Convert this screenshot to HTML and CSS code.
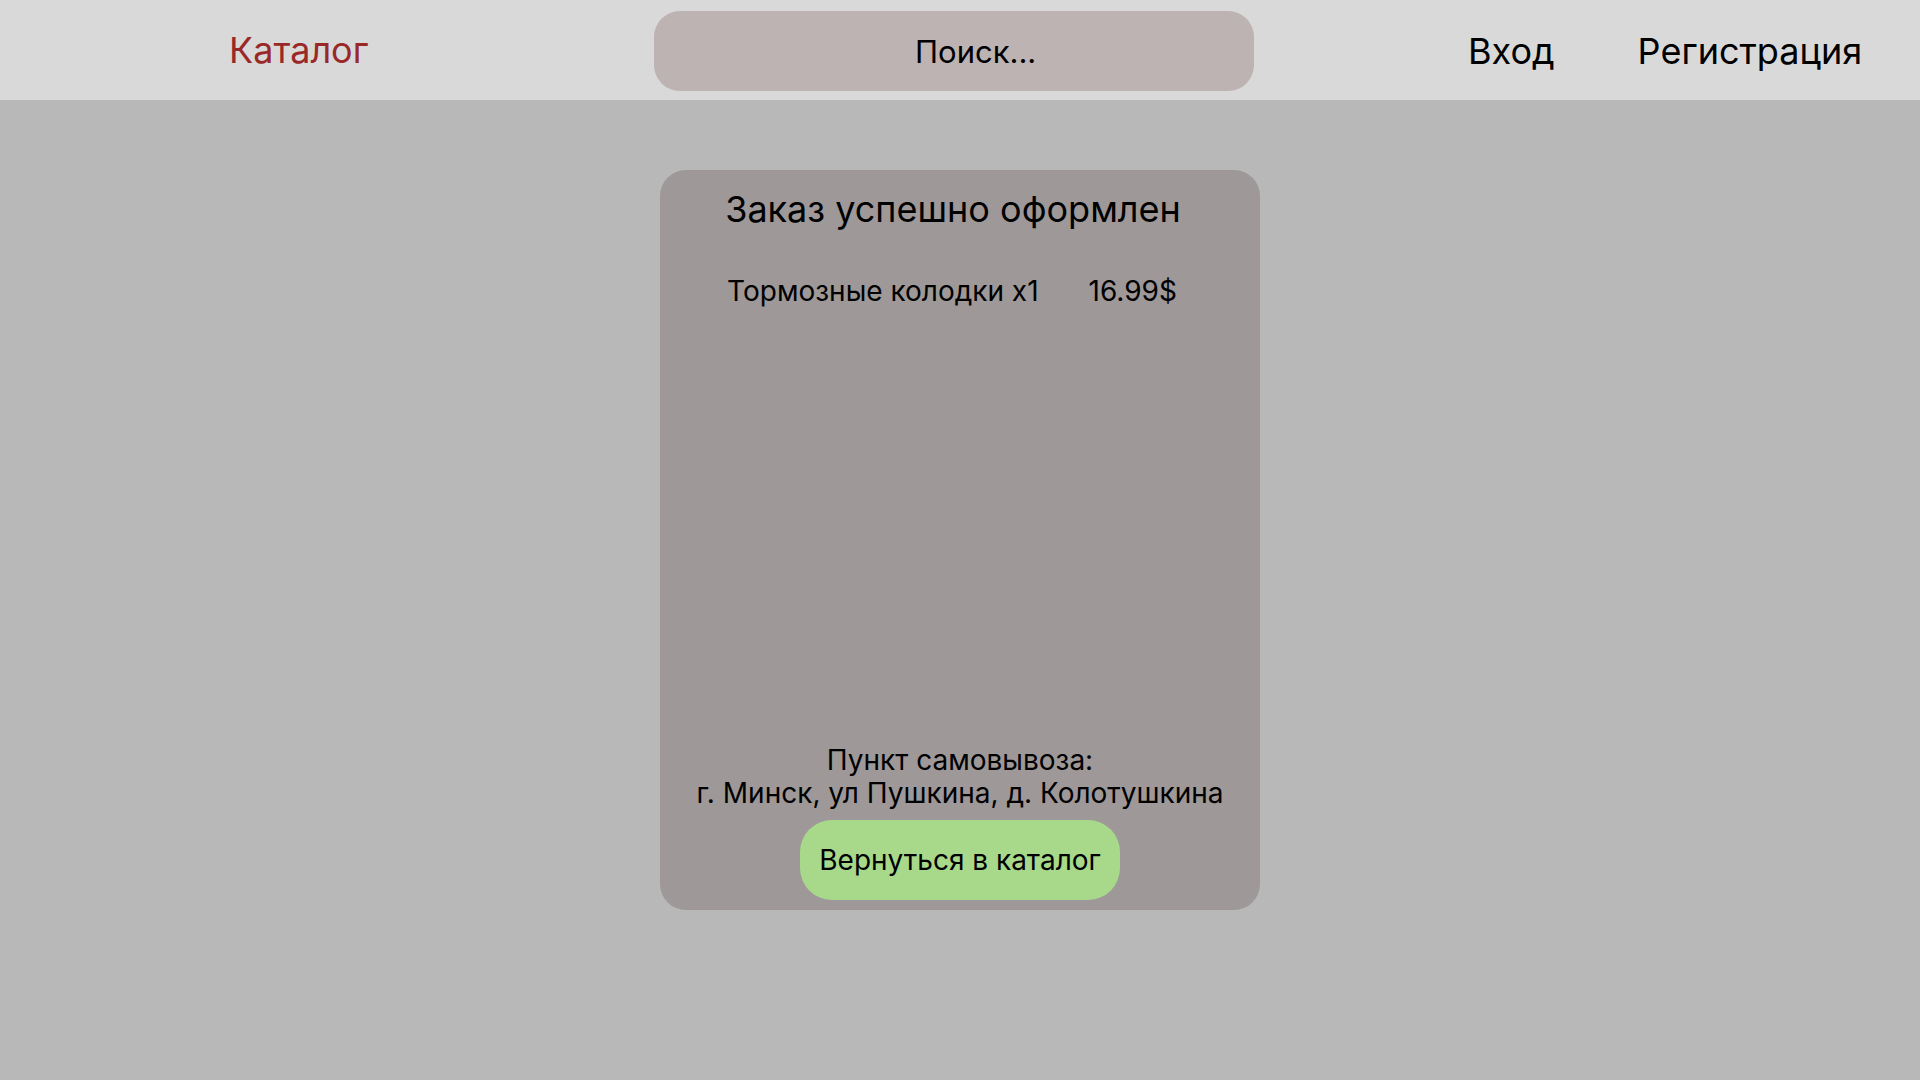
FILE: index.html
```html
<!DOCTYPE html>
<html lang="ru">
<head>
<meta charset="utf-8">
<title>Заказ оформлен</title>
<link rel="stylesheet" href="styles.css">
</head>
<body>
<header class="topbar">
  <a class="catalog-link" href="#">Каталог</a>
  <div class="search"><span class="search-text">Поиск...</span></div>
  <nav class="auth">
    <a class="auth-link login" href="#">Вход</a>
    <a class="auth-link" href="#">Регистрация</a>
  </nav>
</header>
<main class="content">
  <section class="card">
    <h1 class="card-title">Заказ успешно оформлен</h1>
    <div class="item-row">
      <span class="item-name">Тормозные колодки x1</span>
      <span class="item-price">16.99$</span>
    </div>
    <div class="spacer"></div>
    <p class="pickup">Пункт самовывоза:<br>г. Минск, ул Пушкина, д. Колотушкина</p>
    <button class="back-btn">Вернуться в каталог</button>
  </section>
</main>
</body>
</html>
```
FILE: styles.css
```css
* { box-sizing: border-box; }
html, body { margin: 0; padding: 0; }
body {
  width: 1920px;
  height: 1080px;
  background: #b8b8b8;
  font-family: Inter, "Noto Sans", sans-serif;
  color: #000;
  overflow: hidden;
}
a { color: inherit; text-decoration: none; }

.topbar {
  height: 100px;
  background: #d9d9d9;
  display: flex;
  align-items: center;
  padding-left: 229px;
}
.catalog-link {
  font-size: 36px;
  color: #9a2828;
  width: 425px;
  margin-top: -1px;
}
.search {
  width: 600px;
  height: 80px;
  margin-top: 2px;
  background: #bdb3b2;
  border-radius: 26px;
  display: flex;
  align-items: center;
  padding-left: 261px;
}
.search-text { font-size: 31px; }
.auth {
  display: flex;
  margin-left: 214px;
  gap: 83px;
  margin-top: 2px;
}
.auth-link { font-size: 36px; }

.content {
  display: flex;
  justify-content: center;
  padding-top: 70px;
}
.card {
  width: 600px;
  height: 740px;
  background: #9e9898;
  border-radius: 26px;
  display: flex;
  flex-direction: column;
  align-items: center;
  padding: 17px 0 10px;
}
.card-title {
  margin: 0;
  font-size: 36px;
  font-weight: 400;
  margin-left: -14px;
}
.item-row {
  display: flex;
  gap: 50px;
  margin-top: 43px;
  font-size: 28px;
  margin-left: -16px;
}
.spacer { flex: 1; }
.pickup {
  margin: 0 0 10px;
  font-size: 28px;
  line-height: 33px;
  text-align: center;
}
.back-btn {
  width: 320px;
  height: 80px;
  border: none;
  border-radius: 32px;
  background: #a8d88a;
  font-family: Inter, "Noto Sans", sans-serif;
  font-size: 28px;
  color: #000;
  padding: 0;
}
```
